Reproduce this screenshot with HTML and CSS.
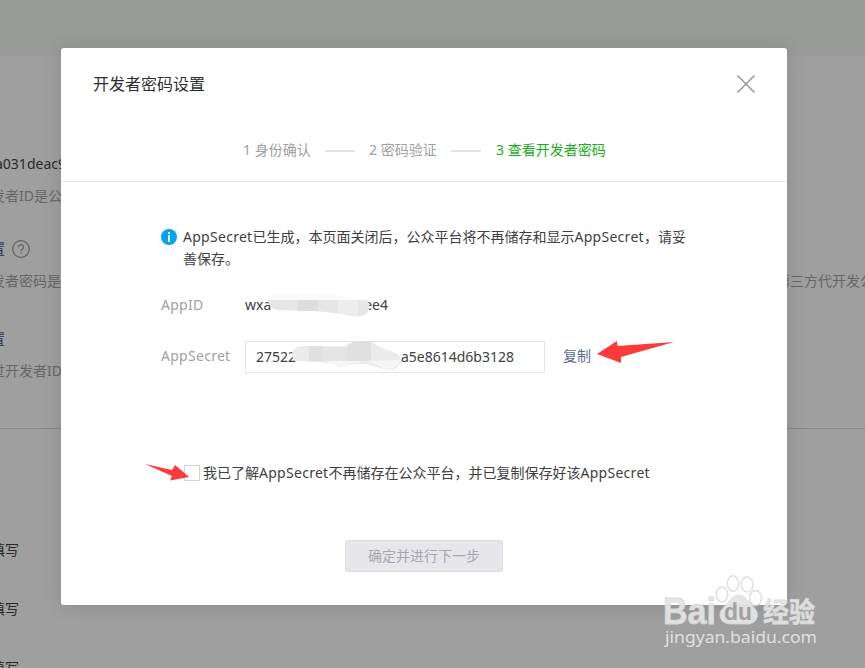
FILE: index.html
```
<!DOCTYPE html>
<html lang="zh-CN">
<head>
    <meta charset="UTF-8">
    <title>开发者密码设置</title>
    <link rel="stylesheet" href="styles.css">
</head>
<body>
    <!-- Page behind the dialog -->
    <div class="page">
        <div class="topbar"></div>
        <div class="page-section">
            <p class="row app-id">a031deac9</p>
            <p class="row tips">发者ID是公众号</p>
            <div class="row label">
                <span>置</span>
                <svg class="help" viewBox="0 0 18 18">
                    <circle cx="9" cy="9" r="8.3"/>
                    <path d="M6.5 7.2a2.5 2.5 0 1 1 3.9 2.1C9.4 10 9 10.3 9 11.2M9 12.6v1.2"/>
                </svg>
            </div>
            <div class="row tips split"><span>发者密码是校验</span><span class="tail">第三方代开发公众号</span></div>
            <div class="row label second">置</div>
            <p class="row tips">过开发者ID及密码</p>
        </div>
        <div class="page-list">
            <p>填写</p>
            <p>填写</p>
            <p>填写</p>
        </div>
    </div>

    <!-- Dialog -->
    <div class="dialog">
        <div class="dialog-header">
            <div class="title-bar">
                <h3>开发者密码设置</h3>
                <svg class="close" viewBox="0 0 18 18"><path d="M.5.5l17 17M17.5.5l-17 17"/></svg>
            </div>
            <div class="steps">
                <span class="step one">1 身份确认</span>
                <i class="step-line"></i>
                <span class="step two">2 密码验证</span>
                <i class="step-line"></i>
                <span class="step current">3 查看开发者密码</span>
            </div>
        </div>

        <div class="dialog-body">
            <div class="notice">
                <svg class="info" viewBox="0 0 16 16">
                    <circle cx="8" cy="8" r="8" fill="#00a5ec"/>
                    <path d="M7 3h2v2H7zM7 6h2v7H7z" fill="#fff"/>
                </svg>
                <p><span class="latin">AppSecret</span>已生成，本页面关闭后，公众平台将不再储存和显示<span class="latin">AppSecret</span>，请妥善保存。</p>
            </div>
            <div class="field">
                <label>AppID</label>
                <div class="id-value">
                    <span>wxa</span><span class="id-end">ee4</span>
                    <svg class="smudge smudge-id" viewBox="0 0 104 26">
                        <path d="M0 10Q0 3 6 2l28 0 30 2 28 3q6 1 8 4z" fill="#fafafa"/>
                        <path d="M0 9h99q5 7 0 13-7 6-20 2l-20-3-19-1-30-1Q0 17 0 9z" fill="#e6e6e6"/>
                        <path d="M30 9h20v11H30z" fill="#dedede"/>
                        <path d="M70 9h20v16q-8 0-20-3z" fill="#ededed"/>
                    </svg>
                </div>
            </div>
            <div class="field secret">
                <label>AppSecret</label>
                <div class="input">
                    <span>27522</span><span class="secret-end">a5e8614d6b3128</span>
                    <svg class="smudge smudge-secret" viewBox="0 0 110 30">
                        <path d="M0 12Q2 5 10 5l30 1 10 1 12-6q9-3 18 0l8 5 13 5q9 3 8 11-5 9-17 6l-18-5-10 0-14 3-12-4-32-2Q0 20 0 12z" fill="#ebebeb"/>
                        <path d="M17 5h13v15H17zM55 4l8-4 16 0V20H55z" fill="#e0e0e0"/>
                        <path d="M30 5.500h25V20H30z" fill="#e5e5e5"/>
                        <path d="M34 20h36l-14 5-8 2-6-3zM76 20l32-1q-2 11-17 8z" fill="#f5f5f5"/>
                    </svg>
                </div>
                <a class="copy">复制</a>
                <svg class="arrow arrow-copy" viewBox="0 0 77 24"><path d="M0 13L20 0 20.500 5 77 1 24 16 24 22z"/></svg>
            </div>
            <div class="agree">
                <i class="checkbox"></i>
                <span>我已了解<span class="latin">AppSecret</span>不再储存在公众平台，并已复制保存好该<span class="latin">AppSecret</span></span>
                <svg class="arrow arrow-check" viewBox="0 0 45 17"><path d="M0 0L27 6 30 1 44 13 25 16.500 27 12z"/></svg>
            </div>
            <div class="actions">
                <button class="btn-disabled">确定并进行下一步</button>
            </div>
        </div>
    </div>

    <!-- Watermark -->
    <svg class="watermark" viewBox="0 0 170 84">
        <g class="mark">
            <text class="brand" x="3" y="49" textLength="53" lengthAdjust="spacingAndGlyphs">Bai</text>
            <ellipse class="toe" cx="62" cy="19.500" rx="5.800" ry="7.500"/>
            <ellipse class="toe" cx="73" cy="8.500" rx="5.700" ry="7.800"/>
            <ellipse class="toe" cx="87" cy="9.500" rx="6" ry="7.500"/>
            <ellipse class="toe" cx="95.500" cy="23" rx="6" ry="7.500"/>
            <path d="M78.500 20q5 0 9 5l7 8q5 6 2 11-3 6-12 5H72q-9 0-11-5-3-6 2-11l7-8q4-5 8.500-5z"/>
            <text class="du" x="64" y="45" textLength="28" lengthAdjust="spacingAndGlyphs">du</text>
            <text class="cn" x="103" y="47" textLength="52" lengthAdjust="spacingAndGlyphs">经验</text>
            <text class="url" x="5" y="68" textLength="152" lengthAdjust="spacingAndGlyphs">jingyan.baidu.com</text>
        </g>
    </svg>
</body>
</html>
```
FILE: styles.css
```
* {
    box-sizing: border-box;
}
body {
    margin: 0;
    width: 865px;
    height: 668px;
    overflow: hidden;
    position: relative;
    background-color: #9f9f9f;
    font-family: "Noto Sans", "Noto Sans CJK SC", sans-serif;
    font-size: 14px;
    line-height: 22px;
    color: #404040;
}
p, h3 {
    margin: 0;
    font-weight: normal;
}
svg {
    display: block;
    flex: none;
}

/* page behind */
.page {
    height: 668px;
    overflow: hidden;
    white-space: nowrap;
}
.topbar {
    height: 56px;
    background-color: #999b99;
}
.page-section {
    height: 373px;
    padding-top: 97px;
    margin-left: -9px;
    border-bottom: 1px solid #8b8b8b;
}
.row {
    height: 22px;
}
.app-id {
    padding-left: 4px;
    color: #2a2a2a;
}
.tips {
    margin-top: 10px;
    color: #666;
}
.label {
    display: flex;
    align-items: center;
    gap: 7px;
    margin-top: 31px;
    color: #2a3850;
}
.label.second {
    margin-top: 36px;
}
.help {
    width: 18px;
    height: 18px;
    fill: none;
    stroke: #606060;
    stroke-width: 1.2;
}
.split {
    display: flex;
    justify-content: space-between;
    width: 911px;
}
.page-list {
    padding-top: 110px;
    margin-left: -9px;
    color: #2a2a2a;
}
.page-list p {
    margin-bottom: 37px;
}

/* dialog */
.dialog {
    position: absolute;
    left: 61px;
    top: 48px;
    width: 726px;
    height: 557px;
    background-color: #fff;
    border-radius: 3px;
    box-shadow: 0 1px 20px rgba(0, 0, 0, 0.12);
}
.dialog-header {
    height: 134px;
    padding: 24px 32px 0;
    border-bottom: 1px solid #e4e6e8;
}
.title-bar {
    display: flex;
    justify-content: space-between;
    align-items: center;
    height: 24px;
}
h3 {
    font-size: 16px;
    color: #2e2e2e;
}
.close {
    width: 18px;
    height: 18px;
    stroke: #8f8f8f;
    stroke-width: 1.3;
}
.steps {
    display: flex;
    align-items: center;
    height: 22px;
    margin-top: 43px;
    padding-left: 150px;
    color: #a0a0a0;
    white-space: nowrap;
}
.step.one,
.step.two {
    width: 68px;
}
.step-line {
    width: 30px;
    height: 2px;
    margin: 1px 14px 0;
    background-color: #e2e5e8;
}
.step.current {
    margin-left: 1px;
    color: #1aad19;
}
.dialog-body {
    padding: 44px 100px 0;
}
.notice {
    display: flex;
    gap: 6px;
}
.notice p {
    width: 505px;
}
.latin {
    letter-spacing: 0.28px;
}
.info {
    width: 16px;
    height: 16px;
    margin-top: 3px;
}
.field {
    display: flex;
    align-items: center;
    height: 22px;
    margin-top: 24px;
}
.field label {
    width: 84px;
    color: #9f9f9f;
    letter-spacing: 0.28px;
}
.secret {
    height: 32px;
    margin-top: 25px;
    position: relative;
}
.secret label,
.copy {
    padding-bottom: 2px;
}
.id-value {
    display: flex;
    justify-content: space-between;
    width: 143px;
    position: relative;
}
.input {
    display: flex;
    justify-content: space-between;
    align-items: center;
    width: 300px;
    height: 32px;
    padding: 0 30px 0 10px;
    border: 1px solid #e4e4e6;
    position: relative;
}
.copy {
    margin-left: 18px;
    color: #576b95;
}
.smudge {
    position: absolute;
}
.smudge-id {
    left: 23px;
    top: -3px;
    width: 104px;
    height: 26px;
}
.smudge-secret {
    left: 46px;
    top: -1px;
    width: 110px;
    height: 30px;
}
.arrow {
    position: absolute;
    fill: #fc3a3a;
}
.arrow-copy {
    left: 436px;
    top: 0;
    width: 77px;
    height: 24px;
}
.agree {
    display: flex;
    align-items: center;
    gap: 3px;
    height: 22px;
    margin: 89px 0 0 23px;
    position: relative;
    white-space: nowrap;
}
.checkbox {
    width: 16px;
    height: 16px;
    border: 1px solid #d5d5d5;
}
.arrow-check {
    left: -39px;
    top: 2px;
    width: 45px;
    height: 17px;
}
.actions {
    display: flex;
    justify-content: center;
    margin-top: 56px;
}
.btn-disabled {
    width: 158px;
    height: 32px;
    padding: 0;
    font: inherit;
    color: #a8a8ab;
    background-color: #e6e6eb;
    border: 1px solid #d9d9de;
    border-radius: 3px;
}

/* watermark */
.watermark {
    position: absolute;
    left: 660px;
    top: 575px;
    width: 170px;
    height: 84px;
    overflow: visible;
}
.mark {
    fill: #e4e4e4;
    stroke: #dadada;
    stroke-width: 0.8;
    opacity: 0.95;
}
.mark .toe {
    fill: rgba(255, 255, 255, 0.35);
    stroke: #dedede;
    stroke-width: 1.5;
}
.brand {
    font: bold 36px "Liberation Sans", sans-serif;
}
.mark .du {
    font: bold 24px "Liberation Sans", sans-serif;
    fill: #a2a2a2;
    stroke: none;
}
.cn {
    font: bold 27px "Noto Sans CJK SC", sans-serif;
}
.mark .url {
    font: 17px "Noto Sans", sans-serif;
    stroke: none;
}
```
